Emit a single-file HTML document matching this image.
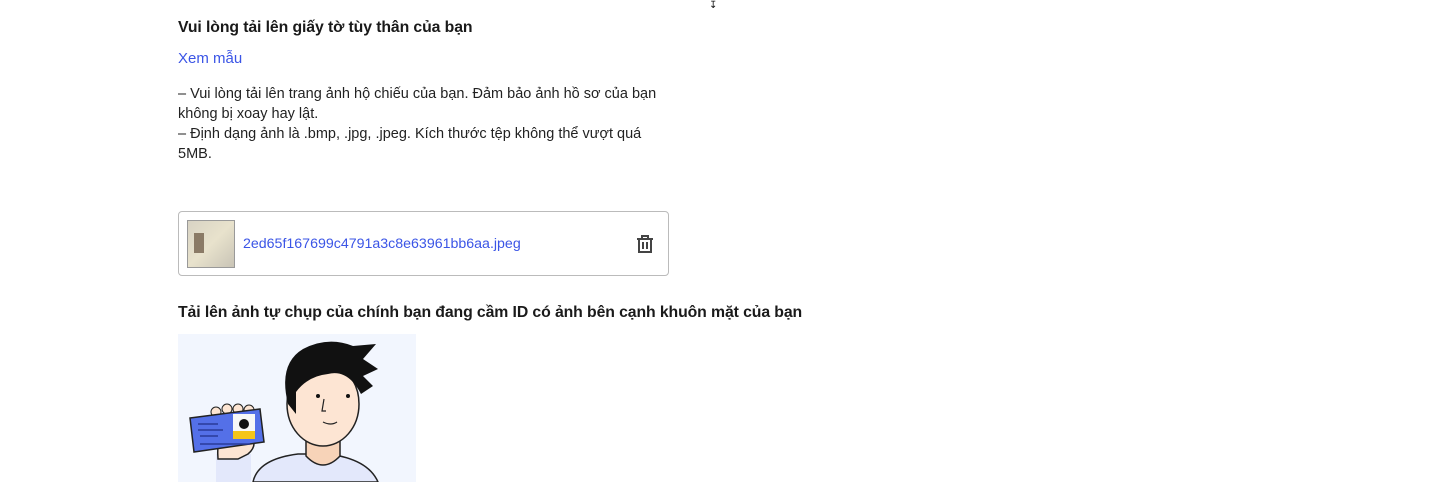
<!DOCTYPE html>
<html><head><meta charset="utf-8"><style>
body{margin:0;background:#fff;font-family:"Liberation Sans",Arial,sans-serif;color:#111;width:1429px;height:500px;overflow:hidden;position:relative}
.a{position:absolute;left:178px}
h3{margin:0;font-size:15.8px;font-weight:bold;color:#1a1a1a;letter-spacing:-0.1px}
</style></head><body>
<div style="position:absolute;left:709px;top:0;font-size:10px">&#8615;</div>
<h3 class="a" style="top:19px">Vui lòng tải lên giấy tờ tùy thân của bạn</h3>
<div class="a" style="top:50px;font-size:15px;color:#3b55e6">Xem mẫu</div>
<div class="a" style="top:84px;font-size:14.5px;line-height:20px;width:490px;color:#222">– Vui lòng tải lên trang ảnh hộ chiếu của bạn. Đảm bảo ảnh hồ sơ của bạn không bị xoay hay lật.<br>– Định dạng ảnh là .bmp, .jpg, .jpeg. Kích thước tệp không thể vượt quá 5MB.</div>
<div class="a" style="top:211px;width:489px;height:63px;border:1px solid #bbb;border-radius:4px">
 <div style="position:absolute;left:8px;top:8px;width:46px;height:46px;background:linear-gradient(135deg,#d8d3c4,#e8e2cc 50%,#c9c4b6);border:1px solid #999"><div style="position:absolute;left:6px;top:12px;width:10px;height:20px;background:#8a7a66"></div></div>
 <div style="position:absolute;left:64px;top:24px;font-size:14.2px;color:#3b55e6">2ed65f167699c4791a3c8e63961bb6aa.jpeg</div>
 <svg style="position:absolute;left:456px;top:22px" width="20" height="20" viewBox="0 0 20 20" fill="none" stroke="#444" stroke-width="2"><path d="M2 5h16M7 5V2h6v3M4 5v13h12V5M8 8v7M12 8v7"/></svg>
</div>
<h3 class="a" style="top:304px">Tải lên ảnh tự chụp của chính bạn đang cầm ID có ảnh bên cạnh khuôn mặt của bạn</h3>
<svg class="a" style="top:334px" width="238" height="148" viewBox="0 0 238 148">
<rect width="238" height="148" fill="#f2f6fe"/>
<path d="M75 148 Q80 125 120 120 L150 120 Q190 125 200 148Z" fill="#e3e8fb" stroke="#222" stroke-width="1.5"/>
<path d="M128 100 L128 122 Q145 140 162 122 L162 100Z" fill="#f7d3b8" stroke="#222" stroke-width="1.5"/>
<ellipse cx="145" cy="70" rx="36" ry="42" fill="#fde5d3" stroke="#222" stroke-width="1.5"/>
<path d="M110 70 Q100 30 125 15 Q150 2 175 12 L198 10 L185 25 L200 35 L185 42 L195 52 L183 60 Q170 35 150 40 Q130 42 118 58 L118 80 Z" fill="#111"/>
<circle cx="140" cy="62" r="2" fill="#111"/><circle cx="170" cy="62" r="2" fill="#111"/>
<path d="M146 65 l-2 12 h4 M145 88 q8 4 14 0" stroke="#222" fill="none" stroke-width="1.2"/>
<rect x="38" y="120" width="35" height="28" fill="#e3e8fb"/>
<path d="M40 125 Q38 100 50 95 L70 98 Q82 110 70 120 L60 125Z" fill="#fde5d3" stroke="#222" stroke-width="1.5"/>
<circle cx="38" cy="78" r="5" fill="#fde5d3" stroke="#222"/><circle cx="49" cy="75" r="5" fill="#fde5d3" stroke="#222"/><circle cx="60" cy="75" r="5" fill="#fde5d3" stroke="#222"/><circle cx="71" cy="76" r="5" fill="#fde5d3" stroke="#222"/>
<path d="M12 84 L82 75 L86 108 L16 118Z" fill="#5470e8" stroke="#222" stroke-width="1.5"/>
<rect x="55" y="80" width="22" height="25" fill="#f7f7f7"/>
<rect x="55" y="97" width="22" height="8" fill="#f5c518"/>
<circle cx="66" cy="90" r="5" fill="#111"/>
<path d="M20 90h20M20 96h25M22 102h18M22 110h50" stroke="#2a3a99" stroke-width="1.5"/>
</svg>
</body></html>
